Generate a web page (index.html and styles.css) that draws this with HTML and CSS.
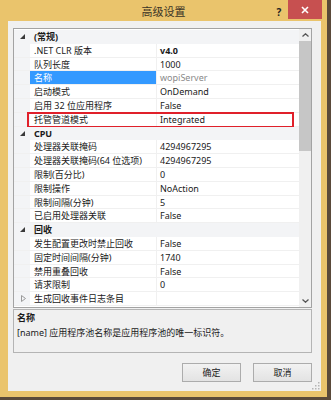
FILE: index.html
```html
<!DOCTYPE html>
<html lang="zh">
<head>
<meta charset="utf-8">
<link rel="stylesheet" href="styles.css">
</head>
<body>
<div class="window">
  <div class="titlebar">
    <span></span>
    <span class="title">高级设置</span>
    <div class="controls">
      <span class="help">?</span>
      <span class="close"><svg width="8" height="8" viewBox="0 0 8 8"><path d="M1 1L7 7M7 1L1 7" stroke="#fff" stroke-width="1.6"/></svg></span>
    </div>
  </div>
  <div class="client">
    <div class="grid">
      <div class="rows">
        <div class="row cat"><span class="gut"><svg width="5" height="5" viewBox="0 0 5 5"><path d="M5 0V5H0Z" fill="#3a3a3a"/></svg></span><span class="catname">(常规)</span></div>
        <div class="row"><span class="gut"></span><span class="name">.NET CLR 版本</span><span class="val bold">v4.0</span></div>
        <div class="row"><span class="gut"></span><span class="name">队列长度</span><span class="val">1000</span></div>
        <div class="row"><span class="gut"></span><span class="name sel">名称</span><span class="val ro">wopiServer</span></div>
        <div class="row"><span class="gut"></span><span class="name">启动模式</span><span class="val">OnDemand</span></div>
        <div class="row"><span class="gut"></span><span class="name">启用 32 位应用程序</span><span class="val">False</span></div>
        <div class="row mark"><span class="gut"></span><span class="name">托管管道模式</span><span class="val">Integrated</span><span class="redbox"></span></div>
        <div class="row cat"><span class="gut"><svg width="5" height="5" viewBox="0 0 5 5"><path d="M5 0V5H0Z" fill="#3a3a3a"/></svg></span><span class="catname">CPU</span></div>
        <div class="row"><span class="gut"></span><span class="name">处理器关联掩码</span><span class="val">4294967295</span></div>
        <div class="row"><span class="gut"></span><span class="name">处理器关联掩码(64 位选项)</span><span class="val">4294967295</span></div>
        <div class="row"><span class="gut"></span><span class="name">限制(百分比)</span><span class="val">0</span></div>
        <div class="row"><span class="gut"></span><span class="name">限制操作</span><span class="val">NoAction</span></div>
        <div class="row"><span class="gut"></span><span class="name">限制间隔(分钟)</span><span class="val">5</span></div>
        <div class="row"><span class="gut"></span><span class="name">已启用处理器关联</span><span class="val">False</span></div>
        <div class="row cat"><span class="gut"><svg width="5" height="5" viewBox="0 0 5 5"><path d="M5 0V5H0Z" fill="#3a3a3a"/></svg></span><span class="catname">回收</span></div>
        <div class="row"><span class="gut"></span><span class="name">发生配置更改时禁止回收</span><span class="val">False</span></div>
        <div class="row"><span class="gut"></span><span class="name">固定时间间隔(分钟)</span><span class="val">1740</span></div>
        <div class="row"><span class="gut"></span><span class="name">禁用重叠回收</span><span class="val">False</span></div>
        <div class="row"><span class="gut"></span><span class="name">请求限制</span><span class="val">0</span></div>
        <div class="row"><span class="gut exp"><svg width="5" height="7" viewBox="0 0 5 7"><path d="M0.5 0.5L4.5 3.5L0.5 6.5Z" fill="none" stroke="#9a9a9a" stroke-width="1"/></svg></span><span class="name">生成回收事件日志条目</span><span class="val"></span></div>
      </div>
      <div class="scrollbar">
        <div class="sbtn"><svg width="7" height="4" viewBox="0 0 7 4"><path d="M0.5 3.5L3.5 0.8L6.5 3.5" fill="none" stroke="#555" stroke-width="1.3"/></svg></div>
        <div class="thumb"></div>
        <div class="track"></div>
        <div class="sbtn"><svg width="7" height="4" viewBox="0 0 7 4"><path d="M0.5 0.5L3.5 3.2L6.5 0.5" fill="none" stroke="#555" stroke-width="1.3"/></svg></div>
      </div>
    </div>
    <div class="desc">
      <div class="desc-title">名称</div>
      <div class="desc-text">[name] 应用程序池名称是应用程序池的唯一标识符。</div>
    </div>
    <div class="buttons">
      <button class="btn">确定</button>
      <button class="btn">取消</button>
    </div>
    <svg class="grip" width="8" height="8" viewBox="0 0 8 8"><g fill="#b5b5b5"><rect x="6" y="0" width="1.5" height="1.5"/><rect x="3" y="3" width="1.5" height="1.5"/><rect x="6" y="3" width="1.5" height="1.5"/><rect x="0" y="6" width="1.5" height="1.5"/><rect x="3" y="6" width="1.5" height="1.5"/><rect x="6" y="6" width="1.5" height="1.5"/></g></svg>
  </div>
</div>
</body>
</html>
```

FILE: styles.css
```css
* { box-sizing: border-box; }
html, body { margin: 0; padding: 0; }
body {
  width: 331px;
  height: 400px;
  background: #5a4a3a;
  font-family: "Noto Sans", "Noto Sans CJK SC", sans-serif;
  font-size: 9px;
  color: #1a1a1a;
  overflow: hidden;
}
.window {
  width: 327px;
  height: 397px;
  background: #eac46c;
  display: flex;
  flex-direction: column;
}
.titlebar {
  height: 21px;
  display: grid;
  grid-template-columns: 1fr auto 1fr;
  align-items: start;
}
.title {
  font-size: 11px;
  line-height: 24px;
  color: #3a3326;
}
.controls {
  display: flex;
  justify-content: flex-end;
  align-items: flex-start;
  padding-right: 5px;
}
.help {
  width: 16px;
  text-align: center;
  font-weight: bold;
  font-size: 10px;
  line-height: 24px;
  color: #222;
  margin-right: 1px;
}
.close {
  width: 34px;
  height: 19px;
  background: #c75050;
  display: flex;
  align-items: center;
  justify-content: center;
}
.client {
  position: relative;
  margin: 0 6px 6px 8px;
  flex: 1;
  background: #f0f0f0;
  padding: 7px 9px 0 5px;
  display: flex;
  flex-direction: column;
}
.grid {
  height: 280px;
  border: 1px solid #a3a3a3;
  background: #fff;
  padding: 1px 0;
  display: flex;
}
.rows {
  flex: 1;
  display: flex;
  flex-direction: column;
}
.row {
  height: 13.8px;
  display: grid;
  grid-template-columns: 16px 127px 1fr;
  align-items: stretch;
  line-height: 13px;
  border-bottom: 1px solid #f0f0f0;
  position: relative;
  white-space: nowrap;
}
.gut {
  background: #f3f4f6;
  display: flex;
  align-items: center;
  justify-content: flex-end;
  padding-right: 5px;
}
.gut.exp { padding-right: 4px; }
.name {
  padding-left: 4px;
  overflow: hidden;
  border-right: 1px solid #f0f0f0;
}
.name.sel {
  background: #3399ff;
  color: #fff;
}
.val {
  padding-left: 3px;
  overflow: hidden;
}
.bold { font-weight: bold; }
.ro { color: #8a8a8a; }
.row.cat {
  background: #f3f4f6;
  border-bottom-color: #f3f4f6;
}
.catname {
  grid-column: 2 / 4;
  padding-left: 4px;
  font-weight: bold;
}
.redbox {
  position: absolute;
  left: 13px;
  right: 5px;
  top: -1px;
  bottom: -2px;
  border: 2px solid #e0202a;
  pointer-events: none;
}
.scrollbar {
  width: 12px;
  display: flex;
  flex-direction: column;
  background: #f0f0f0;
  margin-top: -1px;
  margin-bottom: -1px;
}
.sbtn {
  height: 12px;
  display: flex;
  align-items: center;
  justify-content: center;
  background: #f0f0f0;
}
.thumb {
  height: 110px;
  background: #c6c6c6;
}
.track {
  flex: 1;
  background: #f0f0f0;
}
.desc {
  margin-top: 1px;
  height: 44px;
  border: 1px solid #b4b4b4;
  padding: 0 3px;
  line-height: 15px;
  background: #f0f0f0;
}
.desc-title { font-weight: bold; }
.buttons {
  margin-top: 10px;
  display: flex;
  justify-content: flex-end;
  gap: 12px;
}
.btn {
  width: 59px;
  height: 19px;
  padding: 0;
  border: 1px solid #acacac;
  background: linear-gradient(#f2f2f2, #e3e3e3);
  font-family: "Noto Sans", "Noto Sans CJK SC", sans-serif;
  font-size: 9px;
  color: #1a1a1a;
}
.grip {
  position: absolute;
  right: 1px;
  bottom: 1px;
}
```
